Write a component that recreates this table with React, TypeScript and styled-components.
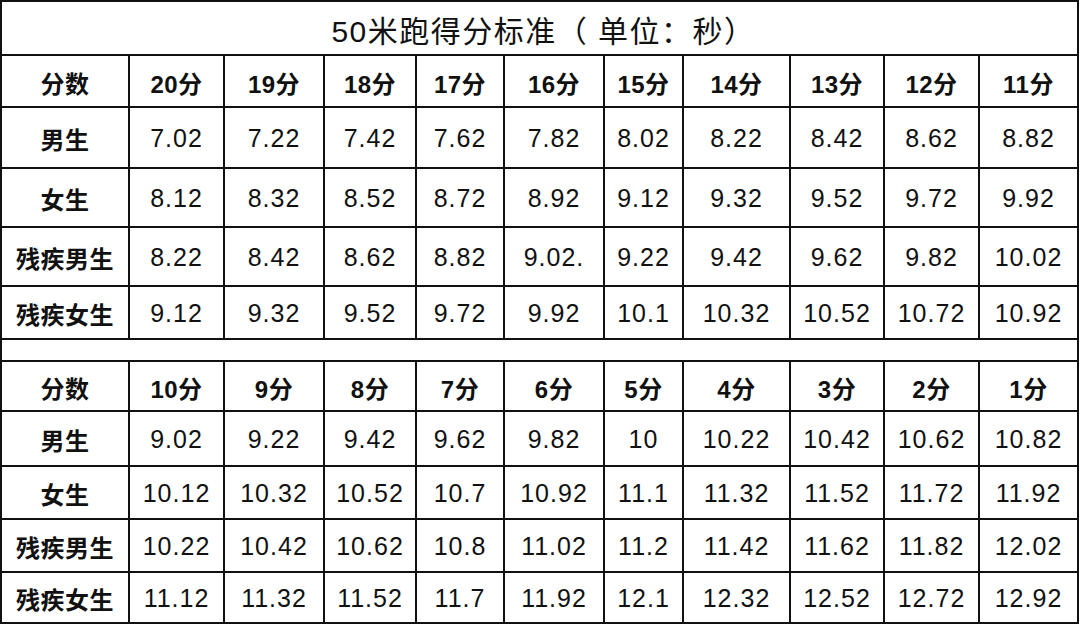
import styled, { createGlobalStyle } from "styled-components";

const GlobalStyle = createGlobalStyle`
  html, body {
    margin: 0;
    padding: 0;
    background: #ffffff;
  }
  body {
    font-family: "Liberation Sans", "Noto Sans CJK SC", sans-serif;
    color: #111111;
  }
`;

// 列宽按原图的竖线位置
const columns = "126px 93px 98px 90px 86px 98px 77px 105px 92px 93px 97px";

export const Sheet = styled.div`
  display: grid;
  grid-template-columns: ${columns};
  grid-template-rows: 52px 50px 59px 57px 57px 51px 20px 48px 53px 51px 51px 49px;
  gap: 2px;
  padding: 2px;
  width: 1079px;
  box-sizing: border-box;
  background: #111111;
`;

export const Title = styled.div`
  grid-column: 1 / -1;
  background: #fff;
  display: flex;
  align-items: center;
  justify-content: center;
  font-size: 30px;
  letter-spacing: 1.5px;
  padding-top: 2px;
  padding-left: 8px;
`;

export const Spacer = styled.div`
  grid-column: 1 / -1;
  background: #fff;
`;

export const Cell = styled.div<{ $bold?: boolean }>`
  background: #fff;
  display: flex;
  align-items: center;
  justify-content: center;
  padding-top: 2px;
  font-size: ${(p) => (p.$bold ? "24px" : "25px")};
  font-weight: ${(p) => (p.$bold ? 700 : 400)};
  letter-spacing: ${(p) => (p.$bold ? "0.5px" : "1px")};
  white-space: nowrap;
`;

const top = {
  head: ["20分", "19分", "18分", "17分", "16分", "15分", "14分", "13分", "12分", "11分"],
  rows: [
    ["男生", "7.02", "7.22", "7.42", "7.62", "7.82", "8.02", "8.22", "8.42", "8.62", "8.82"],
    ["女生", "8.12", "8.32", "8.52", "8.72", "8.92", "9.12", "9.32", "9.52", "9.72", "9.92"],
    ["残疾男生", "8.22", "8.42", "8.62", "8.82", "9.02.", "9.22", "9.42", "9.62", "9.82", "10.02"],
    ["残疾女生", "9.12", "9.32", "9.52", "9.72", "9.92", "10.1", "10.32", "10.52", "10.72", "10.92"],
  ],
};

const bottom = {
  head: ["10分", "9分", "8分", "7分", "6分", "5分", "4分", "3分", "2分", "1分"],
  rows: [
    ["男生", "9.02", "9.22", "9.42", "9.62", "9.82", "10", "10.22", "10.42", "10.62", "10.82"],
    ["女生", "10.12", "10.32", "10.52", "10.7", "10.92", "11.1", "11.32", "11.52", "11.72", "11.92"],
    ["残疾男生", "10.22", "10.42", "10.62", "10.8", "11.02", "11.2", "11.42", "11.62", "11.82", "12.02"],
    ["残疾女生", "11.12", "11.32", "11.52", "11.7", "11.92", "12.1", "12.32", "12.52", "12.72", "12.92"],
  ],
};

function Block({ data, name }: { data: typeof top; name: string }) {
  return (
    <>
      <Cell $bold>分数</Cell>
      {data.head.map((h) => (
        <Cell $bold key={`${name}-h-${h}`}>{h}</Cell>
      ))}
      {data.rows.map((row, r) =>
        row.map((v, i) => (
          <Cell $bold={i === 0} key={`${name}-${r}-${i}`}>{v}</Cell>
        ))
      )}
    </>
  );
}

export default function App() {
  return (
    <>
      <GlobalStyle />
      <Sheet>
        <Title>50米跑得分标准（ 单位：秒）</Title>
        <Block data={top} name="top" />
        <Spacer />
        <Block data={bottom} name="bottom" />
      </Sheet>
    </>
  );
}
